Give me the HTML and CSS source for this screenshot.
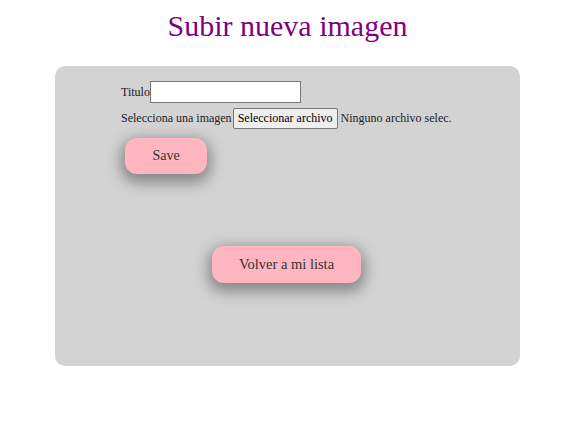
FILE: index.html
```html
<!DOCTYPE html>
<html>
<head>
<meta charset="utf-8">
<link rel="stylesheet" href="styles.css">
</head>
<body>
<h1 class="title">Subir nueva imagen</h1>
<div class="panel">
  <form class="form">
    <div class="row"><label class="label">Titulo</label><input class="text-input" type="text"></div>
    <div class="row"><label class="label">Selecciona una imagen</label><span class="file-btn">Seleccionar archivo</span><span class="file-name">Ninguno archivo selec.</span></div>
    <button type="button" class="btn save">Save</button>
  </form>
  <div class="back-wrap"><button type="button" class="btn back">Volver a mi lista</button></div>
</div>
</body>
</html>
```

FILE: styles.css
```css
html, body { margin: 0; padding: 0; background: #fff; }
body { font-family: "Liberation Serif", "Times New Roman", serif; color: #333; }
.title {
  margin: 0;
  padding-top: 9px;
  padding-right: 10px;
  height: 57px;
  text-align: center;
  font-weight: normal;
  font-size: 30px;
  line-height: 34px;
  color: #800080;
}
.panel {
  margin-left: 55px;
  width: 465px;
  height: 300px;
  background: #d3d3d3;
  border-radius: 10px;
  box-sizing: border-box;
  padding-top: 15px;
  padding-left: 66px;
}
.form { display: flex; flex-direction: column; align-items: flex-start; }
.row { display: flex; align-items: center; font-size: 12px; color: #222; }
.row + .row { margin-top: 5px; }
.text-input {
  width: 151px; height: 22px; box-sizing: border-box;
  border: 1px solid #767676; background: #fff; margin: 0; padding: 0;
}
.file-btn {
  display: inline-block; height: 21px; box-sizing: border-box; line-height: 19px;
  padding: 0 4px; margin-left: 1px; border: 1px solid #767676; background: #efefef;
  border-radius: 2px; color: #000; font-size: 12px;
}
.file-name { margin-left: 3px; }
.btn {
  border: none; background: #ffb6c1; border-radius: 12px;
  font-family: "Liberation Serif", "Times New Roman", serif; color: #333;
  box-shadow: 0 5px 14px 4px rgba(0,0,0,0.35);
}
.save { margin-top: 9px; margin-left: 4px; width: 82px; height: 36px; font-size: 14px; }
.back-wrap { display: flex; justify-content: center; padding-right: 68px; margin-top: 72px; }
.back { width: 149px; height: 37px; font-size: 14.5px; }
```
